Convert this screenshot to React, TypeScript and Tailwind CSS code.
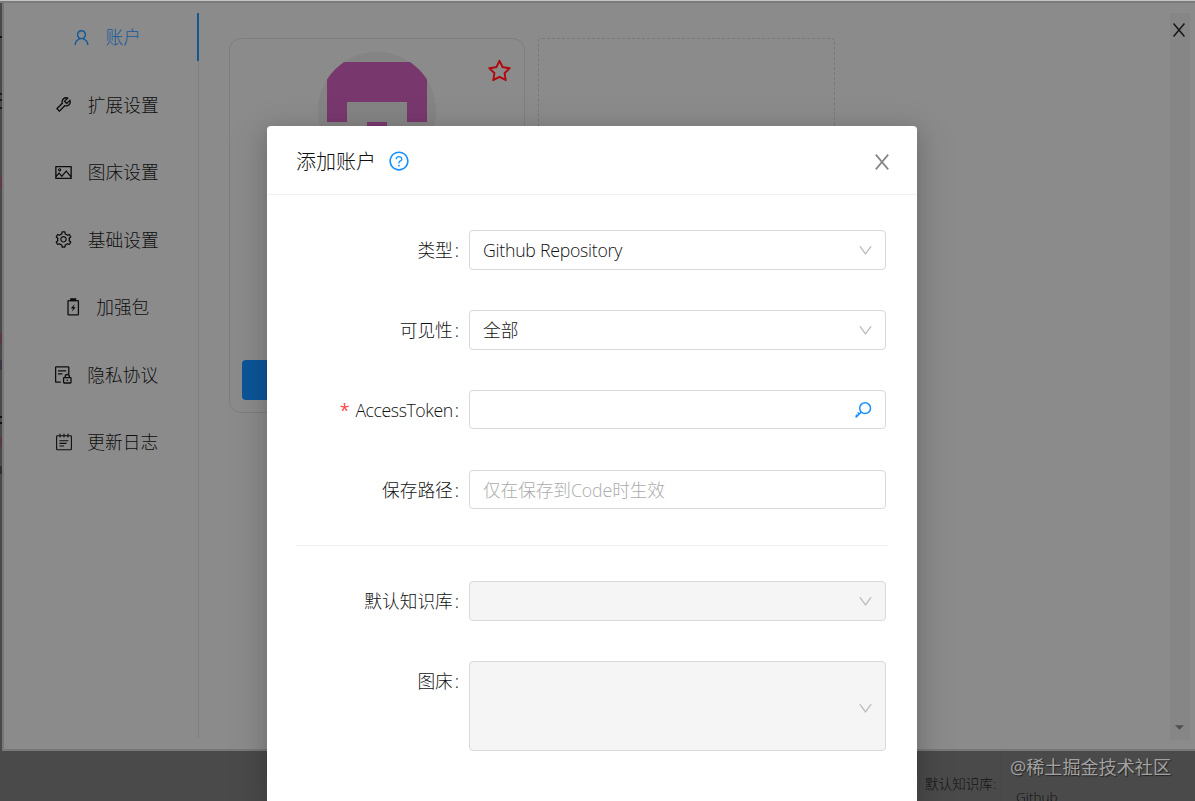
import React from 'react';
import {
    AiOutlineDown,
    AiOutlinePicture,
    AiOutlineQuestionCircle,
    AiOutlineSetting,
    AiOutlineStar,
    AiOutlineTool,
    AiOutlineUser
} from 'react-icons/ai';

const CloseIcon: React.FC<{ className?: string }> = ({className}) => (
    <svg viewBox="0 0 16 16" className={className} fill="none" stroke="currentColor" strokeWidth="1.7">
        <path d="M1.8 .6 14.2 15.4M14.2 .6 1.8 15.4"/>
    </svg>
);

const BatteryIcon: React.FC = () => (
    <svg viewBox="0 0 18 18" className="w-[18px] h-[18px]" fill="none" stroke="currentColor" strokeWidth="1.3">
        <rect x="4" y="2.6" width="10.4" height="14.2" rx="0.6"/>
        <path d="M6.8 1h4.8v1.6H6.8z" fill="currentColor"/>
        <path d="M10.8 6 6.8 10.3l2.2.1L7.8 13.6l4-4.3-2.3-.1z" fill="currentColor" stroke="none"/>
    </svg>
);

const PrivacyIcon: React.FC = () => (
    <svg viewBox="0 0 18 18" className="w-[18px] h-[18px]" fill="none" stroke="currentColor" strokeWidth="1.3">
        <path d="M13.8 8V1.6a.8.8 0 0 0-.8-.8H1.4a.8.8 0 0 0-.8.8v13.8a.8.8 0 0 0 .8.8h4.4M3 4.8h8.2M3 7.8h4.4"/>
        <rect x="8.6" y="11.6" width="7.4" height="5.4" rx="0.5"/>
        <path d="M10.2 11.4v-.8a2.1 2.1 0 0 1 4.2 0v.8M12.3 13.4v1.6"/>
    </svg>
);

const NotesIcon: React.FC = () => (
    <svg viewBox="0 0 18 18" className="w-[18px] h-[18px]" fill="none" stroke="currentColor" strokeWidth="1.1">
        <rect x="1.6" y="2.8" width="14.8" height="14" rx="0.8"/>
        <path d="M5 .8v3.8M9 .8v3.8M13 .8v3.8M4.4 7.8h9M4.4 10.4h7.2M4.4 13h4.8"/>
    </svg>
);

const KeyIcon: React.FC = () => (
    <svg viewBox="0 0 18 18" className="w-[18px] h-[18px]" fill="none" stroke="currentColor" strokeWidth="1.5">
        <circle cx="10.1" cy="7.2" r="5.4"/>
        <path d="M6.3 11.1 .6 16.4M2.6 11.5l2.2 2M.8 13.7l2 1.8"/>
    </svg>
);

const menuItems = [
    {label: '账户', icon: AiOutlineUser, active: true},
    {label: '扩展设置', icon: AiOutlineTool},
    {label: '图床设置', icon: AiOutlinePicture},
    {label: '基础设置', icon: AiOutlineSetting},
    {label: '加强包', icon: BatteryIcon},
    {label: '隐私协议', icon: PrivacyIcon},
    {label: '更新日志', icon: NotesIcon}
];

const Sidebar: React.FC = () => (
    <nav className="w-[195px] h-[725px] mt-[13px] shrink-0 border-r border-[#808080] flex flex-col gap-[19.5px] pl-3">
        {menuItems.map(({label, icon: Icon, active}) => (
            <div
                key={label}
                className={`h-12 shrink-0 flex items-center justify-center gap-[14.5px] -mr-px border-r-2 ${active ? 'text-[#145a9b] border-[#14578f]' : 'text-[#0e0e0e] border-transparent'}`}
            >
                <Icon className="w-[19px] h-[19px]"/>
                <span className="pt-0.5">{label}</span>
            </div>
        ))}
    </nav>
);

const AccountCard: React.FC = () => (
    <div className="w-[296px] h-[375px] border border-[#7e7e7e] rounded-xl flex flex-col relative pt-[13px] px-3 pb-3">
        <svg viewBox="0 0 118 118" className="w-[118px] h-[118px] self-center">
            <defs>
                <clipPath id="avatar">
                    <circle cx="59" cy="59" r="59"/>
                </clipPath>
            </defs>
            <g clipPath="url(#avatar)">
                <rect width="118" height="118" fill="#848484"/>
                <path d="M9 10h100v60H89V50H29v20H9zM49 70h20v20H49z" fill="#78386e"/>
            </g>
        </svg>
        <AiOutlineStar className="absolute right-[11px] top-[19px] w-[27px] h-[27px] text-[#b0080c]"/>
        <button className="mt-auto w-full h-10 rounded-sm bg-[#0d559a]"/>
    </div>
);

const SelectArrow: React.FC = () => <AiOutlineDown className="w-[17px] h-[17px] -mr-px text-[#bfbfbf]"/>;

interface FieldProps {
    label: string;
    required?: boolean;
    className?: string;
    children?: React.ReactNode;
}

const Field: React.FC<FieldProps> = ({label, required, className = 'h-10', children}) => (
    <div className="flex items-start">
        <label className="w-[202px] h-10 pr-2.5 pt-0.5 shrink-0 flex items-center justify-end text-[#111111]">
            {required && <span className="text-[#ff4d4f] mr-1.5 font-normal">*</span>}
            <span className={required ? 'tracking-[-0.42px]' : ''}>{label}</span>
            <span className="ml-0.5">:</span>
        </label>
        <div
            className={`w-[417px] border border-[#d9d9d9] rounded-sm flex items-center justify-between pl-[13px] pr-3 ${className}`}>
            {children}
        </div>
    </div>
);

const AccountModal: React.FC = () => (
    <div
        className="absolute left-[267px] top-[126px] w-[650px] h-[675px] rounded-t-sm bg-white text-[#111111] shadow-[0_6px_20px_rgba(0,0,0,0.16),0_10px_36px_10px_rgba(0,0,0,0.08)]">
        <div className="h-[69px] border-b border-[#f0f0f0] flex items-center pl-[29px] pr-[27px] pt-0.5">
            <h2 className="text-[20px] pt-0.5">添加账户</h2>
            <AiOutlineQuestionCircle className="w-[22px] h-[22px] ml-3 text-[#1890ff]"/>
            <CloseIcon className="w-4 h-4 ml-auto mt-0.5 text-[#858585]"/>
        </div>
        <div className="pt-[35px] flex flex-col gap-10">
            <Field label="类型">
                <span className="pt-0.5 tracking-[-0.25px]">Github Repository</span>
                <SelectArrow/>
            </Field>
            <Field label="可见性">
                <span className="pt-0.5">全部</span>
                <SelectArrow/>
            </Field>
            <Field label="AccessToken" required className="h-[39px]">
                <span/>
                <span className="text-[#1890ff]"><KeyIcon/></span>
            </Field>
            <Field label="保存路径" className="h-[39px]">
                <span className="pt-0.5 text-[#acacac] tracking-[-0.1px]">仅在保存到Code时生效</span>
            </Field>
        </div>
        <div className="mx-[29px] mt-[35px] mb-[35px] border-t border-[#f0f0f0]"/>
        <div className="flex flex-col gap-10">
            <Field label="默认知识库" className="h-10 bg-[#f5f5f5]">
                <span/>
                <SelectArrow/>
            </Field>
            <Field label="图床" className="h-[90px] pt-1 bg-[#f5f5f5]">
                <span/>
                <SelectArrow/>
            </Field>
        </div>
    </div>
);

const App: React.FC = () => (
    <div
        className="relative w-[1195px] h-[801px] overflow-hidden bg-[#4a4a4a] font-['Open_Sans','Noto_Sans_CJK_SC',sans-serif] font-light text-[17.7px] leading-none">
        <div className="h-[751px] flex">
            {/* page content peeking out beside the drawer */}
            <div className="w-0.5 shrink-0 flex flex-col">
                <div className="mt-9 h-0.5 bg-[#111111]"/>
                <div className="mt-[55px] h-0.5 bg-[#181818]"/>
                <div className="mt-1 h-0.5 bg-[#181818]"/>
                <div className="mt-1.5 h-0.5 bg-[#181818]"/>
                <div className="mt-[68px] h-3 bg-[#5e3c42]"/>
                <div className="mt-[144px] h-3 bg-[#553a40]"/>
                <div className="mt-[15px] h-2.5 bg-[#3d3545]"/>
                <div className="mt-[46px] h-0.5 bg-[#101010]"/>
                <div className="mt-1 h-0.5 bg-[#101010]"/>
                <div className="mt-[13px] h-2.5 bg-[#553a40]"/>
                <div className="mt-[19px] h-2 bg-[#332f33]"/>
            </div>
            <div className="grow bg-[#8b8b8b] border-l-2 border-b-2 border-[#777777] flex">
                <Sidebar/>
                <main className="flex gap-[13px] pt-[38px] pl-[30px]">
                    <AccountCard/>
                    <div className="w-[297px] h-[375px] border border-dashed border-[#797979] rounded-sm"/>
                </main>
                <div className="ml-auto mr-[5px] mt-[13px] w-5 h-[727px] bg-[#868686] flex flex-col items-center justify-between pt-2.5 pb-[10px] shrink-0">
                    <CloseIcon className="w-3.5 h-3.5 -ml-0.5 text-[#161616]"/>
                    <svg viewBox="0 0 10 5" className="w-[9px] h-[5px] -ml-0.5">
                        <path d="M0 0h10L5 5z" fill="#505050"/>
                    </svg>
                </div>
            </div>
        </div>
        <div className="h-[50px] flex text-[#121212] text-[13.6px]">
            <div className="w-[1002px] pl-[925px] pt-[26px] whitespace-nowrap border-r border-[#454545]">默认知识库:</div>
            <div className="pl-3.5 pt-[39px]">Github</div>
        </div>

        <div className="absolute left-0 top-0 w-full h-[3px] bg-[#7a7c7a] border-t border-[#c2c5c2]"/>
        <AccountModal/>
        <div
            className="absolute left-[1010px] top-[758px] font-normal text-[18.1px] whitespace-nowrap text-[#a2a2a2] [text-shadow:1px_1px_1px_#222]">
            @稀土掘金技术社区
        </div>
    </div>
);

export default App;
